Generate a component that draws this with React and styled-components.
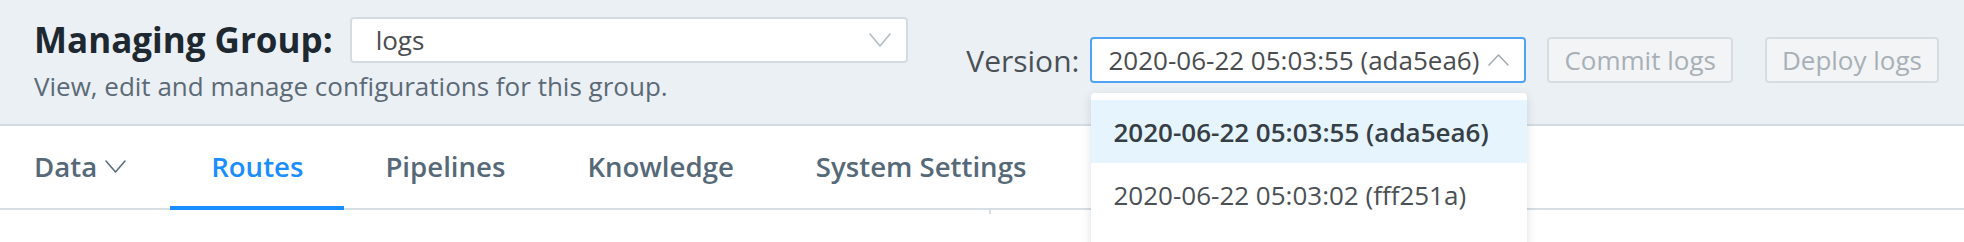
import React from 'react'
import styled, { createGlobalStyle } from 'styled-components'

const GlobalStyle = createGlobalStyle`
  html, body {
    margin: 0;
    padding: 0;
    background: #ffffff;
    font-family: "Open Sans", "Noto Sans", sans-serif;
  }
  * { box-sizing: border-box; }
`

const Page = styled.div`
  width: 1964px;
  height: 242px;
  overflow: hidden;
  background: #ffffff;
`

const Header = styled.header`
  display: flex;
  align-items: flex-start;
  height: 126px;
  padding: 17px 25px 0 34px;
  background: #ebf0f4;
  border-bottom: 2px solid #d3dce2;
`

const TitleBlock = styled.div`
  display: flex;
  flex-direction: column;
`

const TitleRow = styled.div`
  display: flex;
  align-items: center;
  gap: 17px;
  height: 46px;
`

const Title = styled.h1`
  margin: 0;
  font-size: 35px;
  font-weight: 700;
  color: #1d2830;
  line-height: 46px;
`

const Subtitle = styled.p`
  margin: 8px 0 0;
  font-size: 26px;
  line-height: 30px;
  color: #5b6a76;
`

const Select = styled.div`
  position: relative;
  display: flex;
  align-items: center;
  justify-content: space-between;
  width: ${(p) => p.width}px;
  height: 46px;
  padding: 0 15px 0 ${(p) => (p.focused ? 16 : 24)}px;
  background: #ffffff;
  border: ${(p) => (p.focused ? '2px solid #4fa3f7' : '2px solid #d4dce1')};
  border-radius: 4px;
  font-size: 26px;
  color: #4a4d50;
`

const Controls = styled.div`
  display: flex;
  align-items: center;
  margin-left: auto;
  margin-top: 20px;
`

const Label = styled.span`
  font-size: 30px;
  color: #4a5056;
  margin-right: 11px;
`

const Button = styled.button`
  height: 46px;
  padding: 0 15px;
  margin-left: ${(p) => p.gap}px;
  background: #f2f4f6;
  border: 2px solid #d6dde2;
  border-radius: 4px;
  font-family: inherit;
  font-size: 26px;
  color: #a8b0b6;
`

const Menu = styled.div`
  position: absolute;
  top: 54px;
  left: -1px;
  width: 436px;
  padding: 7px 0 24px;
  background: #ffffff;
  border-radius: 4px;
  box-shadow: 0 3px 10px rgba(30, 50, 70, 0.16);
  z-index: 5;
`

const MenuItem = styled.div`
  display: flex;
  align-items: center;
  height: 63px;
  padding: 0 22px;
  font-size: 26px;
  font-weight: ${(p) => (p.active ? 600 : 400)};
  color: ${(p) => (p.active ? '#373f46' : '#4b5055')};
  background: ${(p) => (p.active ? '#e6f4fd' : '#ffffff')};
`

const Nav = styled.nav`
  display: flex;
  height: 84px;
  padding-left: 34px;
  border-bottom: 2px solid #d6dee3;
`

const Tab = styled.div`
  display: flex;
  align-items: center;
  gap: 8px;
  height: 84px;
  margin-bottom: -2px;
  padding: 0 41px;
  font-size: 27.6px;
  font-weight: 600;
  color: ${(p) => (p.active ? '#1a8dff' : '#566978')};
  border-bottom: 4px solid ${(p) => (p.active ? '#1a8dff' : 'transparent')};

  &:first-child {
    padding: 0 44px 0 0;
  }
`

const Body = styled.div`
  display: flex;
  padding-left: 989px;
`

const Tick = styled.div`
  width: 2px;
  height: 4px;
  background: #d6dee3;
`

const Chevron = ({ up, color, w = 21, h = 13, sw = 1.6 }) => (
  <svg width={w} height={h} viewBox={`0 0 ${w} ${h}`} fill="none">
    <polyline
      points={
        up
          ? `1,${h - 1} ${w / 2},1 ${w - 1},${h - 1}`
          : `1,1 ${w / 2},${h - 1} ${w - 1},1`
      }
      stroke={color}
      strokeWidth={sw}
      strokeLinecap="round"
      strokeLinejoin="round"
    />
  </svg>
)

const versions = [
  { label: '2020-06-22 05:03:55 (ada5ea6)', active: true },
  { label: '2020-06-22 05:03:02 (fff251a)' },
]

const tabs = ['Routes', 'Pipelines', 'Knowledge', 'System Settings']

export default function App() {
  return (
    <Page>
      <GlobalStyle />
      <Header>
        <TitleBlock>
          <TitleRow>
            <Title>Managing Group:</Title>
            <Select width={558}>
              <span>logs</span>
              <Chevron color="#b3bbc1" w={22} h={14} />
            </Select>
          </TitleRow>
          <Subtitle>View, edit and manage configurations for this group.</Subtitle>
        </TitleBlock>
        <Controls>
          <Label>Version:</Label>
          <Select width={436} focused>
            <span>{versions[0].label}</span>
            <Chevron up color="#a5adb3" w={21} h={12} />
            <Menu>
              {versions.map((v) => (
                <MenuItem key={v.label} active={v.active}>
                  {v.label}
                </MenuItem>
              ))}
            </Menu>
          </Select>
          <Button gap={21}>Commit logs</Button>
          <Button gap={32}>Deploy logs</Button>
        </Controls>
      </Header>
      <Nav>
        <Tab>
          Data
          <Chevron color="#566978" w={21} h={13} sw={1.5} />
        </Tab>
        {tabs.map((t) => (
          <Tab key={t} active={t === 'Routes'}>
            {t}
          </Tab>
        ))}
      </Nav>
      <Body>
        <Tick />
      </Body>
    </Page>
  )
}
